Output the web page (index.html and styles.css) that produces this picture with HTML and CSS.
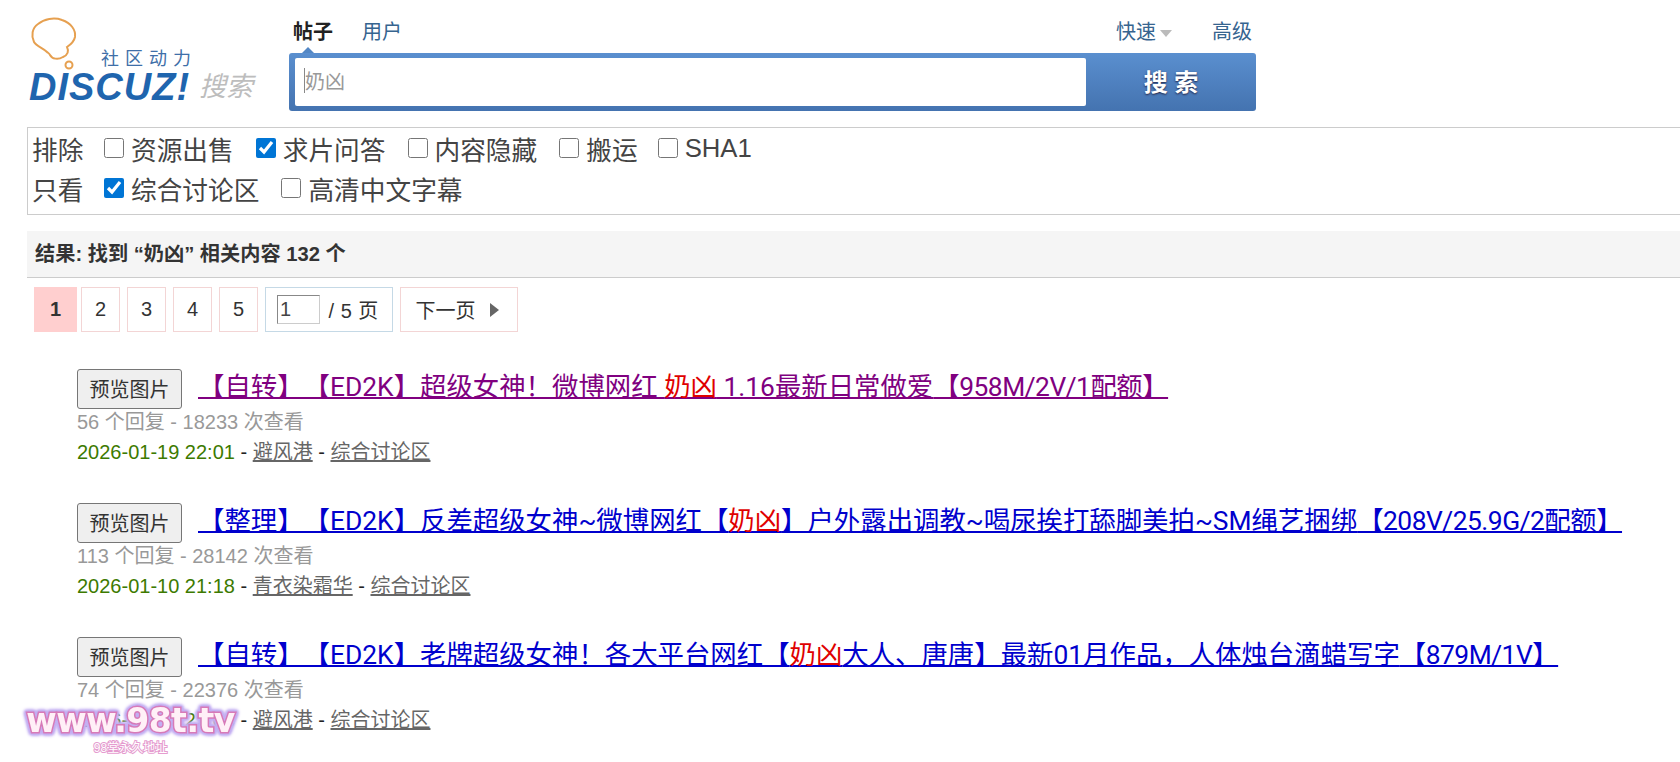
FILE: index.html
```html
<!DOCTYPE html>
<html lang="zh">
<head>
<meta charset="utf-8">
<title>奶凶 - 搜索</title>
<link rel="stylesheet" href="styles.css">
</head>
<body>
<header class="top">
  <a class="logo" href="#">
    <svg class="bubble" width="50" height="56" viewBox="0 0 50 56" fill="none" stroke="#e6a050" stroke-width="2">
      <path d="M17 36C13 32 6 30 4 26 1 20 2 12 8 8 14 3 24 1 32 4 41 7 46 14 45 21 44 26 40 29 37 31 39 35 38 39 33 41 28 44 22 43 20 39 19 37 18 37 17 36Z"/>
      <circle cx="39" cy="49" r="3.5"/>
    </svg>
    <span class="slogan">社区动力</span>
    <span class="brand">DISCUZ!</span>
    <span class="brand-sub">搜索</span>
  </a>
  <div class="search">
    <div class="tabs">
      <div class="tabs-left"><a class="tab tab-on" href="#">帖子</a><a class="tab" href="#">用户</a></div>
      <div class="tabs-right"><a class="tab" href="#">快速<i class="caret-down"></i></a><a class="tab" href="#">高级</a></div>
    </div>
    <div class="searchbar">
      <div class="field"><span class="cursor"></span><span class="query">奶凶</span></div>
      <button class="go" type="button">搜 索</button>
    </div>
  </div>
</header>

<section class="filters">
  <div class="frow"><span class="flabel">排除</span>
    <label class="opt"><input type="checkbox">资源出售</label>
    <label class="opt"><input type="checkbox" checked>求片问答</label>
    <label class="opt"><input type="checkbox">内容隐藏</label>
    <label class="opt"><input type="checkbox">搬运</label>
    <label class="opt"><input type="checkbox">SHA1</label>
  </div>
  <div class="frow"><span class="flabel">只看</span>
    <label class="opt"><input type="checkbox" checked>综合讨论区</label>
    <label class="opt"><input type="checkbox">高清中文字幕</label>
  </div>
</section>

<h2 class="summary">结果: 找到 “奶凶” 相关内容 132 个</h2>

<nav class="pager">
  <strong class="pg pg-on">1</strong>
  <a class="pg" href="#">2</a>
  <a class="pg" href="#">3</a>
  <a class="pg" href="#">4</a>
  <a class="pg" href="#">5</a>
  <label class="pg-jump"><input class="pg-input" value="1"> / 5 页</label>
  <a class="pg pg-next" href="#">下一页<i class="caret-right"></i></a>
</nav>

<ul class="results">
  <li class="item">
    <div class="headline"><button class="preview" type="button">预览图片</button><a class="title title-visited" href="#">【自转】【ED2K】超级女神！微博网红 <em>奶凶</em> 1.16最新日常做爱<span class="size">【958M/2V/1配额】</span></a></div>
    <p class="stats">56 个回复 - 18233 次查看</p>
    <p class="meta"><span class="date">2026-01-19 22:01</span> - <a href="#">避风港</a> - <a href="#">综合讨论区</a></p>
  </li>
  <li class="item">
    <div class="headline"><button class="preview" type="button">预览图片</button><a class="title" href="#">【整理】【ED2K】反差超级女神~微博网红【<em>奶凶</em>】户外露出调教~喝尿挨打舔脚美拍~SM绳艺捆绑<span class="size">【208V/25.9G/2配额】</span></a></div>
    <p class="stats">113 个回复 - 28142 次查看</p>
    <p class="meta"><span class="date">2026-01-10 21:18</span> - <a href="#">青衣染霜华</a> - <a href="#">综合讨论区</a></p>
  </li>
  <li class="item">
    <div class="headline"><button class="preview" type="button">预览图片</button><a class="title" href="#">【自转】【ED2K】老牌超级女神！各大平台网红【<em>奶凶</em>大人、唐唐】最新01月作品，人体烛台滴蜡写字<span class="size">【879M/1V】</span></a></div>
    <p class="stats">74 个回复 - 22376 次查看</p>
    <p class="meta"><span class="date">2026-01-08 22:06</span> - <a href="#">避风港</a> - <a href="#">综合讨论区</a></p>
  </li>
</ul>

<div class="watermark"><span class="wm-url">www.98t.tv</span><span class="wm-sub">98堂永久地址</span></div>
</body>
</html>
```
FILE: styles.css
```css
html, body { margin: 0; padding: 0; }
body {
  background: #fff;
  color: #333;
  font-family: "Liberation Sans", "Noto Sans CJK SC", sans-serif;
  height: 762px;
  overflow: hidden;
  position: relative;
  text-spacing-trim: space-all;
}
a { color: inherit; }

.top { display: flex; padding: 16px 0 0 30px; height: 127px; box-sizing: border-box; }
.logo { position: relative; display: block; width: 259px; height: 90px; text-decoration: none; }
.bubble { position: absolute; left: 0; top: 0; }
.slogan { position: absolute; left: 71px; top: 32px; font-size: 18px; letter-spacing: 6px; color: #3f6fa8; line-height: 22px; white-space: nowrap; }
.brand { position: absolute; left: -1px; top: 51px; font-size: 38px; line-height: 40px; font-weight: 700; font-style: italic; color: #1f65ae; letter-spacing: 1px; white-space: nowrap; }
.brand-sub { position: absolute; left: 169px; top: 51px; font-size: 27px; line-height: 40px; font-style: italic; color: #bdbdbd; white-space: nowrap; }

.search { width: 967px; }
.tabs { display: flex; justify-content: space-between; height: 37px; font-size: 20px; color: #36648f; }
.tabs-left, .tabs-right { display: flex; }
.tab { text-decoration: none; padding: 4px 5px 0 4px; line-height: 24px; margin-right: 20px; }
.tabs-right .tab { margin: 0 0 0 32px; padding-right: 4px; }
.tab-on { font-weight: 700; color: #222; position: relative; }
.tab-on::after { content: ""; position: absolute; left: 13px; top: 31px; border: 6px solid transparent; border-top: 0; border-bottom-color: #5387c5; }
.caret-down { display: inline-block; margin-left: 4px; vertical-align: 2px; border: 6px solid transparent; border-bottom: 0; border-top: 7px solid #bbb; }
.searchbar { display: flex; height: 58px; box-sizing: border-box; border-radius: 3px; padding: 5px 0 5px 6px; background: linear-gradient(#5a8fcf, #4473b0); }
.field { flex: 1; display: flex; align-items: center; padding: 0 0 3px 9px; box-sizing: border-box; background: #fff; border-radius: 2px; font-size: 20px; color: #999; }
.cursor { width: 1px; height: 25px; background: #888; }
.go { width: 170px; background: none; border: 0; color: #fff; font: 700 24px "Liberation Sans", "Noto Sans CJK SC", sans-serif; text-shadow: 0 1px 2px #224; padding: 0 0 4px; }

.filters { margin-left: 27px; border: 1px solid #ccc; border-right: 0; height: 88px; padding: 0 0 0 4px; box-sizing: border-box; color: #444; font-size: 25.7px; }
.frow { display: flex; align-items: center; height: 40px; }
.flabel { width: 72px; }
.opt { display: flex; align-items: center; margin-right: 22px; }
.opt:nth-child(5) { margin-right: 20px; }
.opt input { width: 20px; height: 20px; margin: 0 7px 0 0; accent-color: #0075d5; }

.summary { margin: 16px 0 0 27px; height: 47px; line-height: 46px; padding-left: 8px; box-sizing: border-box; background: #f5f5f5; border-bottom: 1px solid #ccc; font-size: 20.2px; font-weight: 700; color: #333; }

.pager { display: flex; gap: 7px; margin: 9px 0 0 34px; height: 45px; font-size: 20px; color: #333; }
.pg { display: flex; align-items: center; justify-content: center; width: 39px; height: 45px; box-sizing: border-box; border: 1px solid #f3d5d5; text-decoration: none; }
.pg-on { width: 43px; border: 0; background: #ffcfcf; font-weight: 700; margin-right: -3px; }
.pg-jump { display: flex; align-items: center; width: 128px; box-sizing: border-box; border: 1px solid #c5d9e6; padding-left: 11px; white-space: pre; word-spacing: 1px; }
.pg-input { width: 43px; height: 29px; box-sizing: border-box; margin: 0 2px 0 0; padding: 0 2px; border: 1px solid #ccc; border-top-color: #888; border-left-color: #888; font: inherit; color: #444; }
.pg-next { width: 118px; gap: 14px; }
.caret-right { border: 7px solid transparent; border-right: 0; border-left: 9px solid #666; margin-right: 4px; }

.results { list-style: none; margin: 36px 0 0; padding: 0 0 0 77px; }
.item { height: 134px; }
.headline { display: flex; align-items: center; height: 41px; }
.preview { flex: none; width: 105px; height: 40px; padding: 0; margin: 0 16px 0 0; background: #efefef; border: 1px solid #767676; border-radius: 3px; font: 20px "Liberation Sans", "Noto Sans CJK SC", sans-serif; color: #333; }
.title { font-family: Roboto, "Noto Sans CJK SC", sans-serif; font-size: 26.4px; line-height: 30px; margin-bottom: 3px; color: #0000cd; white-space: nowrap; text-decoration-thickness: 2px; }
.title-visited { color: #800080; }
.title em { font-style: normal; color: #e00000; }
.size { letter-spacing: -0.5px; }
.stats, .meta { margin: 0; font-size: 20px; }
.stats { color: #999; line-height: 27px; }
.meta { color: #222; line-height: 32px; }
.meta a { color: #666; }
.date { color: #3d7a00; }

.watermark { position: absolute; left: 24px; top: 700px; width: 213px; text-align: center; }
.wm-url { display: block; font: 700 33px/42px "DejaVu Sans", sans-serif; letter-spacing: -0.5px; color: #fff0f7; -webkit-text-stroke: 3px #d77ab8; paint-order: stroke fill; filter: drop-shadow(1px 0 1px #c3aef2) drop-shadow(-1px 0 1px #c3aef2) drop-shadow(0 1px 1px #c3aef2) drop-shadow(0 -1px 1px #c3aef2); white-space: nowrap; }
.wm-sub { display: block; font-size: 12px; line-height: 12px; color: #fff; -webkit-text-stroke: 2px #e59ccf; paint-order: stroke fill; }
```
